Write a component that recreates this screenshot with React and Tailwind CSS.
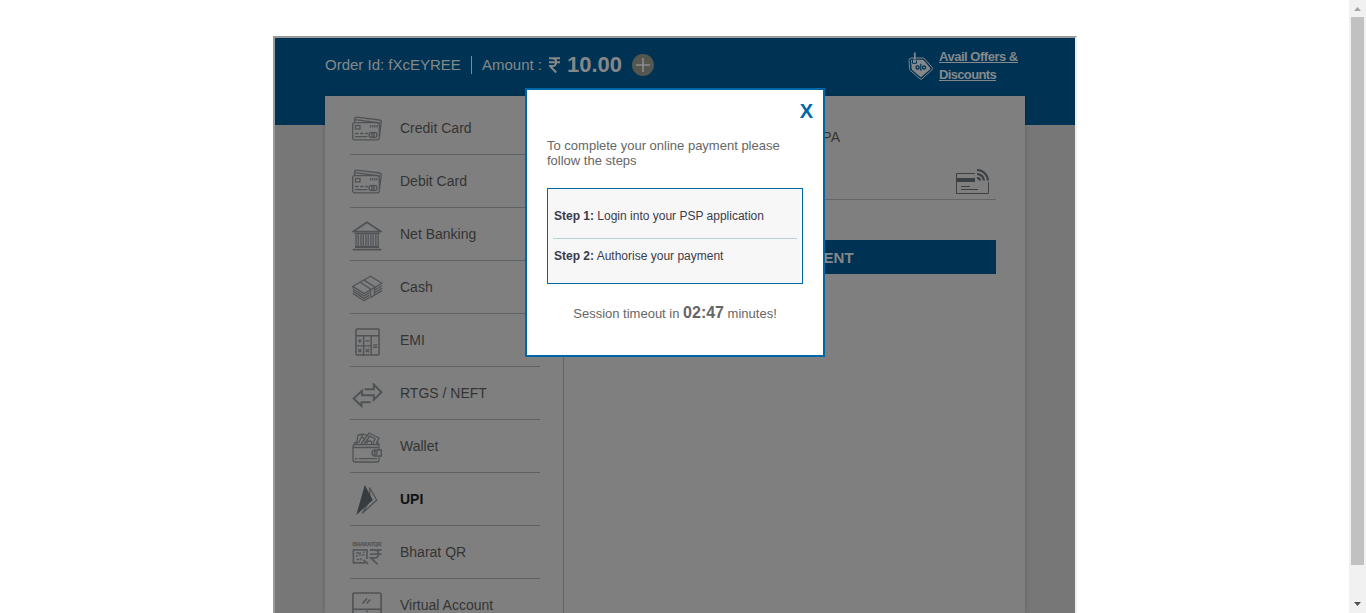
import React from "react";

const stroke = { fill: "none", stroke: "#505356", strokeWidth: 1.3 };

function Cards() {
  return (
    <svg width="30" height="26" viewBox="0 0 30 26" {...stroke}>
      <rect x="0.7" y="6.6" width="26.6" height="17.2" rx="2" />
      <path d="M2.6 6.5V2.6Q2.8 1 4.6 1.1L27.5 4Q29.5 4.4 29.3 6L27.5 20M3 3.6l25 3.4" />
      <rect x="3.5" y="9.5" width="4.5" height="3.5" />
      <path d="M18.5 9v2.5M20.7 9v2.5M22.9 9v2.5M25 9v2.5M3 17.5h3.5M8 17.5h3.5M13 17.5h3M3 20.7h12.5" />
      <circle cx="19.6" cy="19" r="2.6" />
      <circle cx="22.4" cy="19" r="2.6" />
    </svg>
  );
}
function Bank() {
  return (
    <svg width="30" height="30" viewBox="0 0 30 30" {...stroke}>
      <path d="M1.2 10.5 15 1.2l13.8 9.3z" strokeWidth="1.7" />
      <path d="M2.5 12.2h25" strokeWidth="1.5" />
      <path d="M4 12.5v13M6.3 12.5v13M9 12.5v13M11.3 12.5v13M13.9 12.5v13M16.2 12.5v13M18.8 12.5v13M21.1 12.5v13M23.8 12.5v13M26.1 12.5v13" strokeWidth="1.3" />
      <path d="M3 26h24M.7 28.6h28.6" strokeWidth="1.8" />
    </svg>
  );
}
function Cash() {
  return (
    <svg width="31" height="28" viewBox="0 0 31 28" {...stroke} strokeLinejoin="round">
      <path d="M.8 11.3 18.5 1.2 30 8.2 12.2 18.6z" />
      <path d="M.8 13.7 12.2 21l5-3M.8 16.1l11.4 7.3 5-3M.8 18.5l11.4 7.2 5-3M.8 11.3v1.5M22 15.5l8-4.7M22 18l8-4.7M22 20.3l8-4.7" />
      <path d="M8.2 7.2 18.5 14v8.5l4-2.3v-8.4L12 5.1" />
    </svg>
  );
}
function Calculator() {
  return (
    <svg className="ml-px" width="25" height="28" viewBox="0 0 26 29" {...stroke}>
      <rect x="1" y="1" width="24" height="27" rx="1" strokeWidth="1.6" />
      <path d="M1 8h24M1 18.5h15.8M9 8v20M16.8 8v20" strokeWidth="1.5" />
      <path d="M3 13.4h4M5 11.4v4M11 13.4h4M18.8 17.5h4.4M18.8 20h4.4M3.3 21.7l3.4 3.4M6.7 21.7l-3.4 3.4M11.3 21.7l3.4 3.4M14.7 21.7l-3.4 3.4" strokeWidth="1.4" />
    </svg>
  );
}
function Transfer() {
  return (
    <svg className="mt-0.5" width="31" height="25" viewBox="0 0 31 25" {...stroke} strokeWidth="2">
      <path d="M12.5 6.2h9.3V1.5l7.6 7.800-7.6 7.6v-4.7H10V7.8L1.6 15.5 9.5 23v-3.7H18.5" />
    </svg>
  );
}
function WalletIcon() {
  return (
    <svg width="30" height="31" viewBox="0 0 30 31" {...stroke}>
      <path d="M1 14v13.5Q1 30 3.2 30H25q2 0 2-2v-3M27 18v-3.5q0-1.8-2-1.8H2.5Q1 12.5 1 14.5M1 15.5h25M2.5 12.5q-1-2 1.5-2h2M27 13q0-2.5-3-2.5" />
      <path d="M4.5 12 6 3l6-1M6.5 11 11 2l7 2.5M9 12 17 1l10 5-3 6M12 12l6-8 5 2.8-2 5M10 5q3 1 1.5 4.5M15 12q-.5-3 2.5-3t2 3" />
      <path d="M29.3 18h-6.5q-2.8 0-2.8 3t2.8 3h6.5z" />
      <circle cx="23.7" cy="21" r="1.5" />
      <path d="M3 26.7h2.5M7 26.7h18" />
    </svg>
  );
}
function Upi() {
  return (
    <svg width="22" height="31" viewBox="0 0 22 31">
      <path d="M13.5 2.5 20.7 15 6.2 28.4 14 15z" fill="none" stroke="#505356" strokeWidth="1.4" />
      <path d="M8.8 0 16.8 15 .3 30z" fill="#363c3f" />
    </svg>
  );
}
function BharatQr() {
  return (
    <svg width="30" height="23" viewBox="0 0 30 23" {...stroke} stroke="#55585a">
      <text x="0.5" y="4.2" fill="#55585a" strokeWidth="0.3" fontSize="5" fontWeight="700" fontFamily="Liberation Sans, sans-serif" textLength="29" lengthAdjust="spacingAndGlyphs">BHARATQR</text>
      <path d="M15 17V7.800H1.4v13h11.8M11.5 18l4.5 4" strokeWidth="1.7" />
      <path d="M4 11h3M4 14h2M8 10v4M11 10.3h1.7M10 13h2.5M4.5 17.5h3M9 16v2.5" strokeWidth="1.5" />
      <path d="M18 8h11.5M18 12.2h11.5M20 8h2.5q4 0 4 4t-4.3 4h-3.5l7 6.3" strokeWidth="1.8" />
    </svg>
  );
}
function Monitor() {
  return (
    <svg width="30" height="29" viewBox="0 0 30 29" {...stroke} strokeWidth="1.6">
      <rect x=".9" y="1" width="28.2" height="21" rx="1.5" />
      <path d="M1 17.2h28M10.5 11.5l4.5-5M14.8 11.5l3.5-4M14.2 19.3h1.6M10 28l2-6M20 28l-2-6" />
    </svg>
  );
}
function OfferTag() {
  return (
    <svg width="26" height="30" viewBox="0 0 26 30" fill="none" stroke="#858789">
      <path d="M1 9.5Q1 7 3.5 7H14.5Q16 7 17 8.2L24.3 16.6Q25.2 17.6 24.2 18.6L14 27.8Q12.8 28.7 11.7 27.6L2.3 19.5Q1.6 18.8 1.5 17.5z" strokeWidth="1" />
      <path d="M3 9.5 3.6 17.6Q3.7 18.4 4.3 19L12.1 25.8Q12.8 26.4 13.5 25.8L22.2 18.2Q22.8 17.6 22.3 17L15.7 9.3Q15.2 8.7 14.4 8.7H4Q3 8.7 3 9.5z" fill="#858789" stroke="none" />
      <path d="M4.500 9v3.3h4V9.500" stroke="#003353" strokeWidth="1" />
      <path d="M6.8 8.5V1.500" strokeWidth="1.8" />
      <circle cx="9.6" cy="16.4" r="1.6" stroke="#003353" strokeWidth="1.3" />
      <circle cx="16" cy="16.4" r="1.6" stroke="#003353" strokeWidth="1.3" />
      <path d="M12.8 12.8v7" stroke="#003353" strokeWidth="1.2" />
    </svg>
  );
}
function Contactless() {
  return (
    <svg width="33" height="26" viewBox="0 0 33 26" fill="none" stroke="#3c4043">
      <path d="M19 5.5H.5v20h32V14" />
      <path d="M0 12h19" strokeWidth="4" />
      <path d="M5 18.5h9M5 21.5h17" />
      <path d="M21 2A11 11 0 0 1 32 12.5M21 6a7 7 0 0 1 7 6.5M21 10a3.2 3.2 0 0 1 3.2 2.5" strokeWidth="2.2" />
    </svg>
  );
}

const methods = [
  ["Credit Card", Cards, "flex w-[34px] shrink-0 justify-center pt-px"],
  ["Debit Card", Cards, "flex w-[34px] shrink-0 justify-center pt-px"],
  ["Net Banking", Bank],
  ["Cash", Cash],
  ["EMI", Calculator],
  ["RTGS / NEFT", Transfer],
  ["Wallet", WalletIcon],
  ["UPI", Upi],
  ["Bharat QR", BharatQr],
  ["Virtual Account", Monitor],
];

function Sidebar() {
  return (
    <nav className="w-[239px] shrink-0 border-r border-[#636669] pt-[6px] pl-[25px]">
      {methods.map(([label, Icon, iconClass = "flex w-[34px] shrink-0 justify-center pt-[3px]"]) => (
        <div key={label} className="flex h-[53px] w-[190px] items-center border-b border-[#5f6265]">
          <span className={iconClass}><Icon /></span>
          <span className={label === "UPI" ? "pl-4 text-sm font-bold text-[#101214]" : "pl-4 text-sm text-[#343434]"}>{label}</span>
        </div>
      ))}
    </nav>
  );
}

function Header() {
  return (
    <header className="flex h-[58px] shrink-0 items-start bg-[#003353] pl-[50px] text-[#85898c]">
      <div className="flex h-[54px] items-center text-[15px]">
        <span className="w-[146px] whitespace-nowrap">Order Id: fXcEYREE</span>
        <span className="h-[18px] w-px bg-[#85898c]" />
        <span className="ml-[10px] w-[67px] whitespace-nowrap">Amount :</span>
        <svg className="shrink-0" width="11" height="16" viewBox="0 0 11 16" fill="none" stroke="#858789" strokeWidth="2">
          <path d="M0 1.2h11M0 5.2h11M1 1.2h2q4.2 0 4.2 4T3 9H1l6.2 6.5" />
        </svg>
        <span className="ml-[7px] w-[65px] text-[22px] font-bold leading-none text-[#858789]">10.00</span>
        <svg className="shrink-0" width="22" height="22" viewBox="0 0 22 22">
          <circle cx="11" cy="11" r="11" fill="#55564f" />
          <path d="M4 11h14M11 4v14" stroke="#8b8c8b" strokeWidth="1.6" />
        </svg>
      </div>
      <div className="ml-auto flex w-[168px] gap-[6px] pt-[10px]">
        <span className="mt-[3px] ml-px -mr-px shrink-0"><OfferTag /></span>
        <a className="text-[13px] leading-[18px] font-bold tracking-[-0.48px] underline">Avail Offers &amp;<br /><span className="tracking-[-0.65px]">Discounts</span></a>
      </div>
    </header>
  );
}

function Modal() {
  return (
    <div className="absolute top-[88px] left-[525px] h-[269px] w-[300px] border-2 border-[#0067a7] bg-white px-5 text-[#666]">
      <div className="-mr-[10px] flex h-[48px] justify-end pt-[9px] text-[20px] leading-6 font-bold text-[#0067a7]">X</div>
      <p className="text-[13px] leading-[15px]">To complete your online payment please<br />follow the steps</p>
      <div className="mt-5 h-[96px] border border-[#0067a7] bg-[#f7f7f7] px-[5px] text-xs text-[#3b3b4b]">
        <div className="flex h-[50px] items-end border-b border-[#b9cfd9] pb-[14px] pl-px"><span><b>Step 1:</b> Login into your PSP application</span></div>
        <div className="pt-[9px] pl-px"><b>Step 2:</b> Authorise your payment</div>
      </div>
      <div className="pt-[17px] text-center text-[13px] leading-6">Session timeout in <b className="text-base leading-6">02:47</b> minutes!</div>
    </div>
  );
}

export default function App() {
  return (
    <div className="relative flex h-[613px] w-[1366px] overflow-hidden bg-white font-['Liberation_Sans',Arial,sans-serif]">
      <main className="flex flex-1 pt-9 pl-[273px]">
        <div className="w-[804px] border-t-2 border-r-2 border-l-2 border-t-[#9a9a9a] border-r-[#eee] border-l-[#9a9a9a] bg-[#777]">
          <Header />
          <div className="flex h-[517px] bg-[linear-gradient(#003353_29px,#777_29px)] px-[50px]">
            <div className="flex w-[700px] bg-[#7f7f7f] shadow-[0_0_4px_rgba(0,0,0,0.2)]">
              <Sidebar />
              <section className="flex-1 pr-[29px] pl-[28px]">
                <div className="w-[248px] pt-[31px] text-right text-sm leading-5 text-[#343434]">VPA</div>
                <div className="flex h-[53px] items-end justify-end border-b border-[#636669] pr-[7px] pb-[5px]"><Contactless /></div>
                <button className="mt-10 block h-[34px] w-full bg-[#003353] pt-[2px] text-[15px] font-bold text-[#858789]">MAKE PAYMENT</button>
              </section>
            </div>
          </div>
        </div>
      </main>
      <aside className="flex w-[17px] shrink-0 flex-col items-center bg-[#f1f1f1]">
        <svg width="17" height="17" viewBox="0 0 17 17"><path d="M5 11h7L8.5 7z" fill="#a3a3a3" /></svg>
        <div className="h-[548px] w-[13px] bg-[#c1c1c1]" />
        <svg className="mt-auto" width="17" height="17" viewBox="0 0 17 17"><path d="M5 6h7l-3.5 4z" fill="#505050" /></svg>
      </aside>
      <Modal />
    </div>
  );
}
